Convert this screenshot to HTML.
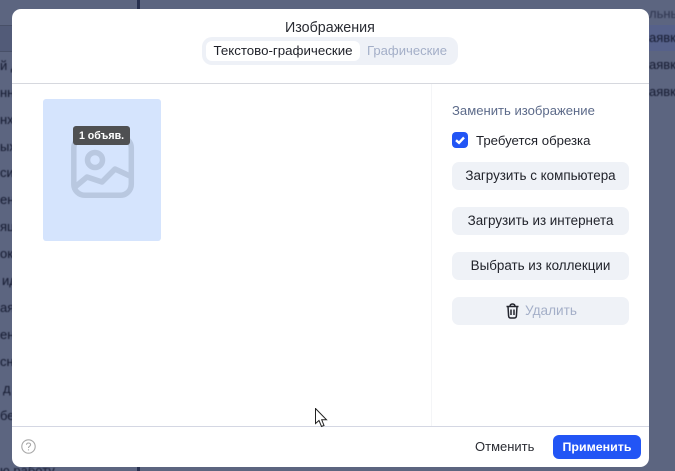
<!DOCTYPE html>
<html lang="ru"><head><meta charset="utf-8"><style>
html,body{margin:0;padding:0;width:675px;height:471px;overflow:hidden}
#r{width:675px;height:471px;overflow:hidden;position:relative;background:#5c6580;font-family:"Liberation Sans",sans-serif;font-size:13px;color:#1f2129}
.a{position:absolute;white-space:nowrap}
.bg{color:#151a30;font-size:13px;line-height:16px;filter:blur(.4px)}
.btn{position:absolute;left:452px;width:177px;height:28px;background:#eff2f7;border-radius:7px;text-align:center;line-height:28px;white-space:nowrap;font-size:13.4px}
</style></head><body><div id="r">
<div class="a" style="left:137px;top:0;width:3px;height:9px;background:#27304f"></div>
<div class="a" style="left:137px;top:467px;width:3px;height:4px;background:#27304f"></div>
<div class="a" style="left:0;top:25px;width:12px;height:25px;background:#525b78;border-top:1px solid #485068;border-bottom:1px solid #485068"></div>
<div class="a" style="left:649px;top:25px;width:26px;height:26px;background:#56618a"></div>
<div class="a bg" style="left:0;top:58px">й д</div>
<div class="a bg" style="left:0;top:85px">нн</div>
<div class="a bg" style="left:0;top:112px">нх</div>
<div class="a bg" style="left:0;top:139px">ых</div>
<div class="a bg" style="left:0;top:165px">си</div>
<div class="a bg" style="left:0;top:192px">ен</div>
<div class="a bg" style="left:0;top:219px">яц</div>
<div class="a bg" style="left:0;top:246px">ок</div>
<div class="a bg" style="left:2px;top:273px">ид</div>
<div class="a bg" style="left:0;top:300px">ая</div>
<div class="a bg" style="left:0;top:327px">ен</div>
<div class="a bg" style="left:0;top:354px">сн</div>
<div class="a bg" style="left:3px;top:381px">д</div>
<div class="a bg" style="left:0;top:408px">бе</div>
<div class="a bg" style="left:0;top:463px">ю работу</div>
<div class="a bg" style="left:649px;top:6px;color:#2f3650">льны</div>
<div class="a bg" style="left:649px;top:30px">аявк</div>
<div class="a bg" style="left:649px;top:57px">аявк</div>
<div class="a bg" style="left:649px;top:84px">аявк</div>

<div class="a" style="left:12px;top:9px;width:637px;height:458px;background:#fff;border-radius:9px;overflow:hidden">
<div class="a" style="left:0;top:74px;width:637px;height:1px;background:#d6d8de"></div>
<div class="a" style="left:0;top:417px;width:637px;height:1px;background:#d4d7e3"></div>
<div class="a" style="left:419px;top:75px;width:1px;height:342px;background:#f4f5f7"></div>
</div>

<div class="a" style="left:285px;top:19px;font-size:14.3px;line-height:18px;color:#2a2c33">Изображения</div>
<div class="a" style="left:202px;top:37px;width:256px;height:28px;background:#eef1f7;border-radius:10px"></div>
<div class="a" style="left:206px;top:41px;width:154px;height:20px;background:#fff;border-radius:6px;text-align:center;line-height:20px;font-size:13.3px">Текстово-графические</div>
<div class="a" style="left:367px;top:41px;line-height:20px;color:#a4afc8;font-size:13.1px">Графические</div>

<div class="a" style="left:43px;top:99px;width:118px;height:142px;background:#d5e4fd;border-radius:3px"></div>
<svg class="a" style="left:70px;top:128px" width="66" height="72" viewBox="0 0 66 72" fill="none" stroke="#b9c8e0" stroke-width="5.5">
<rect x="3.8" y="8.8" width="57.5" height="58.5" rx="11"/>
<circle cx="25" cy="32" r="7.5"/>
<path d="M5 59 L17 49 L32 54 L45 41 L60 48" stroke-linejoin="round"/>
</svg>
<div class="a" style="left:73px;top:126px;width:57px;height:19px;background:#4f5052;border-radius:3px;color:#fff;text-align:center;line-height:20px;font-size:10.6px;font-weight:bold">1 объяв.</div>

<div class="a" style="left:452px;top:103px;line-height:16px;color:#5d6b8a;font-size:13.1px">Заменить изображение</div>
<div class="a" style="left:452px;top:132px;width:16px;height:16px;background:#2255f5;border-radius:4px"></div>
<svg class="a" style="left:452px;top:132px" width="16" height="16" viewBox="0 0 16 16" fill="none"><path d="M4 8.2 L7 10.8 L12 5.5" stroke="#fff" stroke-width="2.4"/></svg>
<div class="a" style="left:476px;top:133px;line-height:16px;font-size:13.2px">Требуется обрезка</div>

<div class="btn" style="top:162px">Загрузить с компьютера</div>
<div class="btn" style="top:207px">Загрузить из интернета</div>
<div class="btn" style="top:252px">Выбрать из коллекции</div>
<div class="a" style="left:452px;top:297px;width:177px;height:28px;background:#eff2f7;border-radius:7px"></div>
<div class="a" style="left:525px;top:303px;line-height:16px;color:#a4afc8;font-size:13.6px">Удалить</div>
<svg class="a" style="left:505px;top:303px" width="15" height="16" viewBox="0 0 15 16" fill="none" stroke="#23252e" stroke-width="1.5">
<path d="M1.5 3.5H13.5M5 3.5C5 1.5 6 1 7.5 1S10 1.5 10 3.5"/>
<path d="M3 3.5L3.6 13C3.7 14.3 4.5 15 5.6 15H9.4C10.5 15 11.3 14.3 11.4 13L12 3.5"/>
<path d="M6 6.5V12M9 6.5V12"/>
</svg>

<svg class="a" style="left:21px;top:439px" width="15" height="15" viewBox="0 0 15 15" fill="none" stroke="#a8a8a8" stroke-width="1.1">
<circle cx="7.5" cy="7.5" r="6.7"/>
<path d="M5.5 5.8C5.5 4.6 6.4 4 7.5 4S9.6 4.7 9.6 5.8C9.6 7.3 7.5 7.2 7.5 9"/>
<path d="M7.5 10.3V11.4"/>
</svg>

<div class="a" style="left:475px;top:439px;line-height:16px;color:#2a2c33">Отменить</div>
<div class="a" style="left:553px;top:435px;width:88px;height:24px;background:#2255f5;border-radius:6px;color:#fff;text-align:center;line-height:25px;font-weight:bold;font-size:12.4px">Применить</div>

<svg class="a" style="left:315px;top:408px" width="13" height="20" viewBox="0 0 13 20">
<path d="M0.5 0.5V15.5L4 12.5L6.5 18.5L9 17.5L6.7 11.8H11.5Z" fill="#fff" stroke="#222" stroke-width="1"/>
</svg>
</div></body></html>
